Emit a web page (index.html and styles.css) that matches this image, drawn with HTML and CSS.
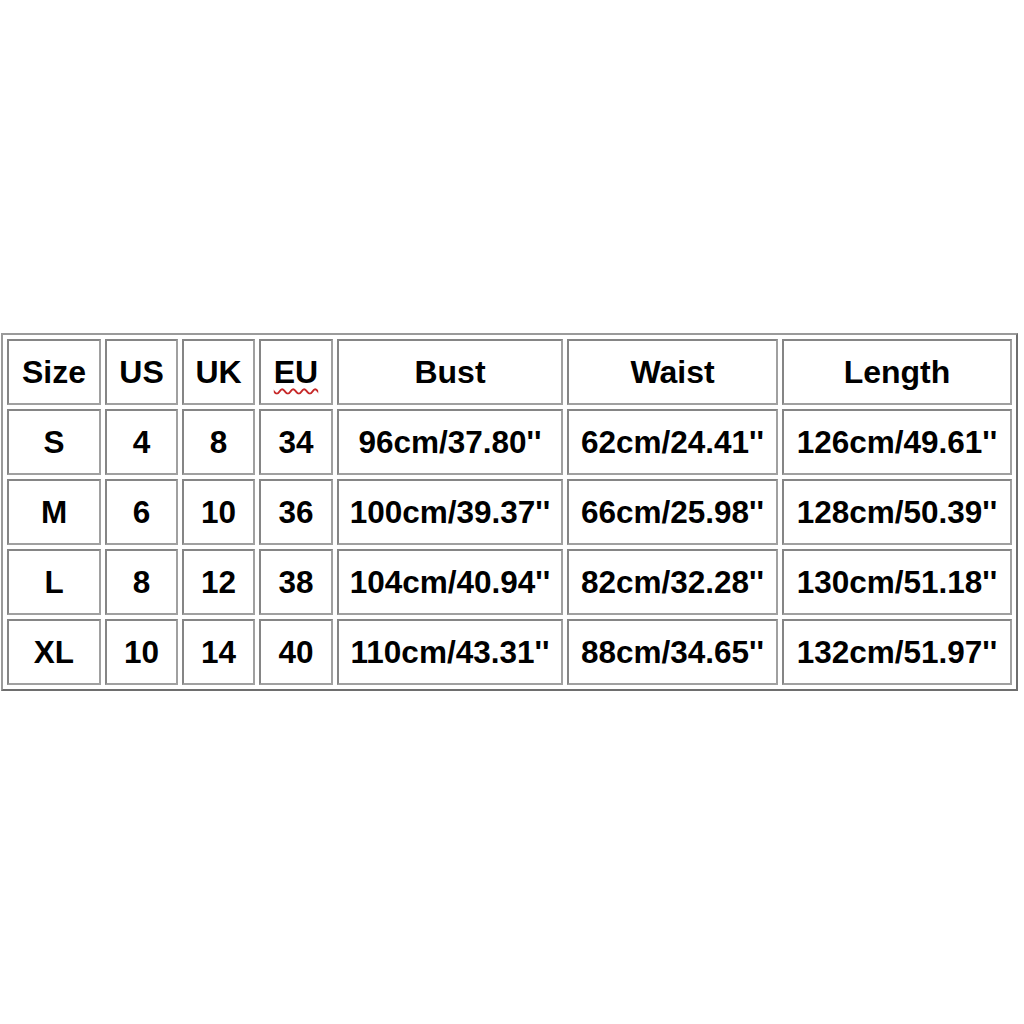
FILE: index.html
```html
<!DOCTYPE html>
<html lang="en">
<head>
<meta charset="utf-8">
<title>Size chart</title>
<link rel="stylesheet" href="styles.css">
</head>
<body>
<div class="chart">
  <div class="cell head">Size</div>
  <div class="cell head">US</div>
  <div class="cell head">UK</div>
  <div class="cell head"><span class="spell">EU</span></div>
  <div class="cell head">Bust</div>
  <div class="cell head">Waist</div>
  <div class="cell head">Length</div>

  <div class="cell">S</div>
  <div class="cell">4</div>
  <div class="cell">8</div>
  <div class="cell">34</div>
  <div class="cell">96cm/37.80''</div>
  <div class="cell">62cm/24.41''</div>
  <div class="cell">126cm/49.61''</div>

  <div class="cell">M</div>
  <div class="cell">6</div>
  <div class="cell">10</div>
  <div class="cell">36</div>
  <div class="cell">100cm/39.37''</div>
  <div class="cell">66cm/25.98''</div>
  <div class="cell">128cm/50.39''</div>

  <div class="cell">L</div>
  <div class="cell">8</div>
  <div class="cell">12</div>
  <div class="cell">38</div>
  <div class="cell">104cm/40.94''</div>
  <div class="cell">82cm/32.28''</div>
  <div class="cell">130cm/51.18''</div>

  <div class="cell">XL</div>
  <div class="cell">10</div>
  <div class="cell">14</div>
  <div class="cell">40</div>
  <div class="cell">110cm/43.31''</div>
  <div class="cell">88cm/34.65''</div>
  <div class="cell">132cm/51.97''</div>
</div>
</body>
</html>
```
FILE: styles.css
```css
html, body {
  margin: 0;
  padding: 0;
  background: #ffffff;
}

body {
  padding-top: 333px;
  padding-left: 1px;
  font-family: "Liberation Sans", Arial, sans-serif;
  color: #000;
}

.chart {
  display: grid;
  grid-template-columns: 94px 73px 73px 74px 226px 211px 230px;
  grid-auto-rows: 66px;
  gap: 4px;
  padding: 4px;
  width: max-content;
  border: 2px solid #9a9a9a;
  border-right-color: #6e6e6e;
  border-bottom-color: #6e6e6e;
}

.cell {
  display: flex;
  align-items: center;
  justify-content: center;
  border: 2px solid #858585;
  border-right-color: #a0a0a0;
  border-bottom-color: #a0a0a0;
  font-weight: bold;
  font-size: 31.5px;
  white-space: nowrap;
}

.cell.head {
  font-size: 32px;
}

.spell {
  text-decoration: underline wavy #c62828;
  text-decoration-thickness: 1.5px;
  text-underline-offset: 5px;
}
```
